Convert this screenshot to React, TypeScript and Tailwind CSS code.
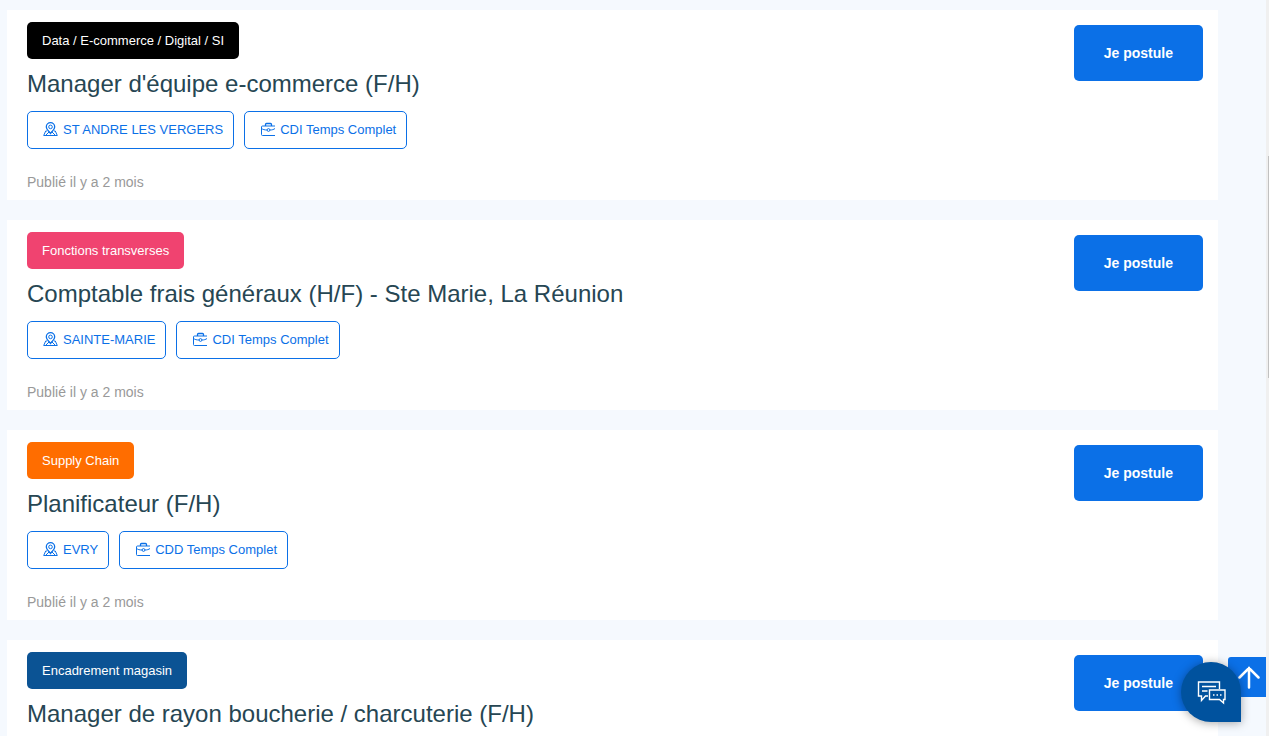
import { ReactNode } from "react";

interface Job {
    category: string;
    color: string;
    title: string;
    city?: string;
    contract?: string;
    published?: string;
}

const jobs: Job[] = [
    { category: "Data / E-commerce / Digital / SI", color: "bg-black", title: "Manager d'équipe e-commerce (F/H)", city: "ST ANDRE LES VERGERS", contract: "CDI Temps Complet", published: "Publié il y a 2 mois" },
    { category: "Fonctions transverses", color: "bg-[#f04370]", title: "Comptable frais généraux (H/F) - Ste Marie, La Réunion", city: "SAINTE-MARIE", contract: "CDI Temps Complet", published: "Publié il y a 2 mois" },
    { category: "Supply Chain", color: "bg-[#ff6d00]", title: "Planificateur (F/H)", city: "EVRY", contract: "CDD Temps Complet", published: "Publié il y a 2 mois" },
    { category: "Encadrement magasin", color: "bg-[#0b5394]", title: "Manager de rayon boucherie / charcuterie (F/H)" },
];

function PlaceIcon() {
    return (
        <svg width="16" height="16" viewBox="0 0 16 16" fill="none" stroke="currentColor" aria-hidden="true">
            <path d="M7.500 11.500C6.200 9.600 3.300 7.500 3.300 4.900a4.200 4.200 0 0 1 8.400 0c0 2.600-2.900 4.700-4.200 6.600Z" strokeWidth="1.300" />
            <circle cx="7.500" cy="4.900" r="1.800" />
            <path d="M4 9H2.700L.7 13.500h13.600L12.300 9H11M2.800 13.200l3.500-3.500M12.200 13.200L8.700 9.700" />
        </svg>
    );
}

function BriefcaseIcon() {
    return (
        <svg width="16" height="16" viewBox="0 0 16 16" fill="none" stroke="currentColor" aria-hidden="true">
            <path d="M15 4H2.500a1 1 0 0 0-1 1v7.500a1 1 0 0 0 1 1H15" />
            <path d="M5.500 4V2.500a1 1 0 0 1 1-1h4a1 1 0 0 1 1 1V4" strokeWidth="1.300" />
            <path d="M1.500 6.500c1.500 1 3 1.500 5.500 1.500M10 8c2 0 3.800-.5 5-1.500" />
            <circle cx="8.500" cy="8" r="1.400" />
        </svg>
    );
}

function Tag({ icon, children }: { icon: ReactNode; children: ReactNode }) {
    return (
        <li className="flex h-[38px] items-center gap-1 rounded-[5px] border border-[#0b70e7] pl-[15px] pr-[10px] text-[13px] text-[#0b70e7]">
            {icon}
            <span>{children}</span>
        </li>
    );
}

function JobCard({ job }: { job: Job }) {
    return (
        <article className="flex items-start justify-between bg-white pl-5 pr-[15px]">
            <div className="pt-3 pb-2">
                <span className={`inline-flex h-[37px] items-center rounded-[5px] px-[15px] align-top text-[13px] text-white ${job.color}`}>
                    {job.category}
                </span>
                <h2 className="mt-[10px] mb-3 text-[24px] leading-[30px] text-[#264653]">{job.title}</h2>
                <ul className="flex flex-wrap gap-[10px]">
                    {job.city && <Tag icon={<PlaceIcon />}>{job.city}</Tag>}
                    {job.contract && <Tag icon={<BriefcaseIcon />}>{job.contract}</Tag>}
                </ul>
                {job.published && <p className="mt-6 text-[14px] leading-[19px] text-[#999999]">{job.published}</p>}
            </div>
            <button type="button" className="mt-[15px] h-14 shrink-0 rounded-[5px] bg-[#0b70e7] px-[30px] text-[14px] font-bold text-white">
                Je postule
            </button>
        </article>
    );
}

export default function App() {
    return (
        <div className="flex h-screen overflow-hidden bg-[#f5f9fe] font-['Liberation_Sans',Arial,sans-serif]">
            <main className="flex min-w-0 flex-1 flex-col gap-5 overflow-hidden pt-[10px] pr-12 pl-[7px]">
                {jobs.map((job) => (
                    <JobCard key={job.title} job={job} />
                ))}
            </main>

            {/* Scroll track */}
            <div className="flex w-[3px] shrink-0 justify-end bg-[#f0f0f0] pt-[156px]">
                <div className="h-[222px] w-px bg-[#c1c1c1]" />
            </div>

            {/* Back to top */}
            <button type="button" aria-label="Haut de page" className="fixed right-[3px] bottom-[39px] flex h-10 w-[38px] items-center justify-center rounded-tl-[3px] bg-[#0b70e7] text-white">
                <svg width="26" height="24" viewBox="0 0 26 24" fill="none" stroke="currentColor" strokeWidth="2.500" strokeLinecap="round" aria-hidden="true" className="shrink-0">
                    <path d="M15 22.500V3M5.500 12.500 15 3l9.500 9.500" />
                </svg>
            </button>

            {/* Chat */}
            <button type="button" aria-label="Discussion" className="fixed right-7 bottom-[14px] flex size-[60px] items-center justify-center rounded-full rounded-br-[3px] bg-[#00529e] text-white shadow-[0_1px_10px_rgba(0,0,0,0.35)]">
                <svg width="30" height="26" viewBox="0 0 30 26" fill="none" stroke="currentColor" strokeWidth="1.400" aria-hidden="true">
                    <path d="M12 17H9.500L5.500 21.500V17h-3V3h21v7" />
                    <path d="M13.500 11h15.500v9.500H27.500V24L23.500 20.500h-10Z" />
                    <path d="M6 7.500h14M6 12h5.500" />
                    <path d="M17 16h1.500M20.500 16H22M24 16h1.500" />
                </svg>
            </button>
        </div>
    );
}
